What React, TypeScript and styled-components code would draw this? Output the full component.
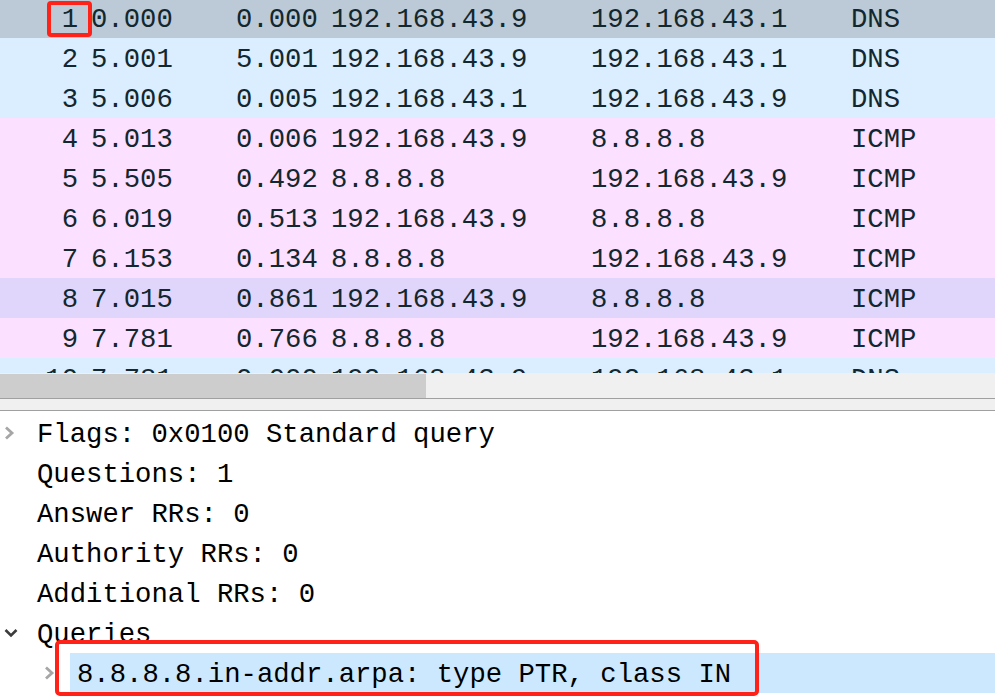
import React from "react";
import styled, { createGlobalStyle } from "styled-components";

const Global = createGlobalStyle`
  html, body { margin: 0; padding: 0; background: #ffffff; overflow: hidden; }
  body { width: 995px; height: 700px; }
`;

const MONO = `"Liberation Mono", "DejaVu Sans Mono", monospace`;

const Page = styled.div`
  width: 995px;
  height: 700px;
  display: flex;
  flex-direction: column;
  overflow: hidden;
  font-family: ${MONO};
  font-size: 27.25px;
  position: relative;
`;

const PacketList = styled.div`
  height: 373px;
  overflow: hidden;
  display: flex;
  flex-direction: column;
`;

const RowsInner = styled.div`
  margin-top: -2px;
  display: flex;
  flex-direction: column;
`;

type Kind = "sel" | "dns" | "icmp" | "hover";
const BG: Record<Kind, string> = {
  sel: "#bbcad6",
  dns: "#daeeff",
  icmp: "#fce0ff",
  hover: "#e0d6fc",
};

const PacketRow = styled.div<{ $kind: Kind }>`
  position: relative;
  flex: none;
  height: 40px;
  box-sizing: border-box;
  padding-top: 4px;
  line-height: 36px;
  display: grid;
  grid-template-columns: 78px 158px 95px 260px 260px 1fr;
  background: ${(p) => BG[p.$kind]};
  color: #12272e;
  white-space: pre;
`;

const NumCell = styled.span`
  text-align: right;
`;

const TimeCell = styled.span`
  padding-left: 13px;
`;

const Cell = styled.span``;

const NoMark = styled.div`
  position: absolute;
  left: 47px;
  top: 3px;
  width: 45px;
  height: 36px;
  box-sizing: border-box;
  border: 4px solid #ff2218;
  border-radius: 4px;
  pointer-events: none;
`;

const HScroll = styled.div`
  height: 25px;
  background: #f0f0f0;
  display: flex;
  align-items: stretch;
  padding-top: 1px;
  box-sizing: border-box;
`;

const Thumb = styled.div`
  width: 426px;
  background: #cdcdcd;
`;

const Splitter = styled.div`
  height: 13px;
  background: #f0f0f0;
  border-top: 1px solid #a0a0a0;
  border-bottom: 1px solid #a0a0a0;
  box-sizing: border-box;
`;

const Details = styled.div`
  flex: 1;
  background: #ffffff;
  padding-top: 2px;
  display: flex;
  flex-direction: column;
  color: #000000;
  position: relative;
`;

const DetailRow = styled.div<{ $level: number }>`
  height: 40px;
  display: flex;
  align-items: stretch;
  padding-left: ${(p) => p.$level * 40}px;
  white-space: pre;
`;

const Gutter = styled.span`
  width: 37px;
  flex: none;
  display: flex;
  align-items: center;
  padding-left: 4px;
  box-sizing: border-box;
`;

const Label = styled.span<{ $selected?: boolean }>`
  box-sizing: border-box;
  height: 40px;
  padding-top: 4px;
  line-height: 36px;
  ${(p) =>
    p.$selected
      ? `flex: 1; margin-left: -7px; padding-left: 7px; background: #cce8ff;`
      : ``}
`;

const QueryMark = styled.div`
  position: absolute;
  left: 55px;
  top: 229px;
  width: 704px;
  height: 56px;
  box-sizing: border-box;
  border: 4px solid #ff2218;
  border-radius: 5px;
  pointer-events: none;
`;

const Chevron = ({ open, dark }: { open?: boolean; dark?: boolean }) => {
  const color = dark ? "#3c3c3c" : "#a6a6a6";
  if (open) {
    return (
      <svg width="14" height="10" viewBox="0 0 14 10">
        <polyline points="1.5,2 7,7.5 12.5,2" fill="none" stroke={color} strokeWidth="2.6" />
      </svg>
    );
  }
  return (
    <svg width="11" height="14" viewBox="0 0 11 14">
      <polyline points="2,1.5 8,7 2,12.5" fill="none" stroke={color} strokeWidth="2.8" />
    </svg>
  );
};

const packets: [string, string, string, string, string, string, Kind][] = [
  ["1", "0.000", "0.000", "192.168.43.9", "192.168.43.1", "DNS", "sel"],
  ["2", "5.001", "5.001", "192.168.43.9", "192.168.43.1", "DNS", "dns"],
  ["3", "5.006", "0.005", "192.168.43.1", "192.168.43.9", "DNS", "dns"],
  ["4", "5.013", "0.006", "192.168.43.9", "8.8.8.8", "ICMP", "icmp"],
  ["5", "5.505", "0.492", "8.8.8.8", "192.168.43.9", "ICMP", "icmp"],
  ["6", "6.019", "0.513", "192.168.43.9", "8.8.8.8", "ICMP", "icmp"],
  ["7", "6.153", "0.134", "8.8.8.8", "192.168.43.9", "ICMP", "icmp"],
  ["8", "7.015", "0.861", "192.168.43.9", "8.8.8.8", "ICMP", "hover"],
  ["9", "7.781", "0.766", "8.8.8.8", "192.168.43.9", "ICMP", "icmp"],
  ["10", "7.781", "0.000", "192.168.43.9", "192.168.43.1", "DNS", "dns"],
];

type Detail = { text: string; level: number; chevron?: "closed" | "open"; dark?: boolean; selected?: boolean };
const details: Detail[] = [
  { text: "Flags: 0x0100 Standard query", level: 0, chevron: "closed" },
  { text: "Questions: 1", level: 0 },
  { text: "Answer RRs: 0", level: 0 },
  { text: "Authority RRs: 0", level: 0 },
  { text: "Additional RRs: 0", level: 0 },
  { text: "Queries", level: 0, chevron: "open", dark: true },
  { text: "8.8.8.8.in-addr.arpa: type PTR, class IN", level: 1, chevron: "closed", selected: true },
];

export default function App() {
  return (
    <Page>
      <Global />
      <PacketList>
        <RowsInner>
          {packets.map(([no, t, d, src, dst, proto, kind]) => (
            <PacketRow key={no} $kind={kind}>
              <NumCell>{no}</NumCell>
              <TimeCell>{t}</TimeCell>
              <Cell>{d}</Cell>
              <Cell>{src}</Cell>
              <Cell>{dst}</Cell>
              <Cell>{proto}</Cell>
              {no === "1" && <NoMark />}
            </PacketRow>
          ))}
        </RowsInner>
      </PacketList>
      <HScroll>
        <Thumb />
      </HScroll>
      <Splitter />
      <Details>
        {details.map((r) => (
          <DetailRow key={r.text} $level={r.level}>
            <Gutter>
              {r.chevron && <Chevron open={r.chevron === "open"} dark={r.dark} />}
            </Gutter>
            <Label $selected={r.selected}>{r.text}</Label>
          </DetailRow>
        ))}
        <QueryMark />
      </Details>
    </Page>
  );
}
